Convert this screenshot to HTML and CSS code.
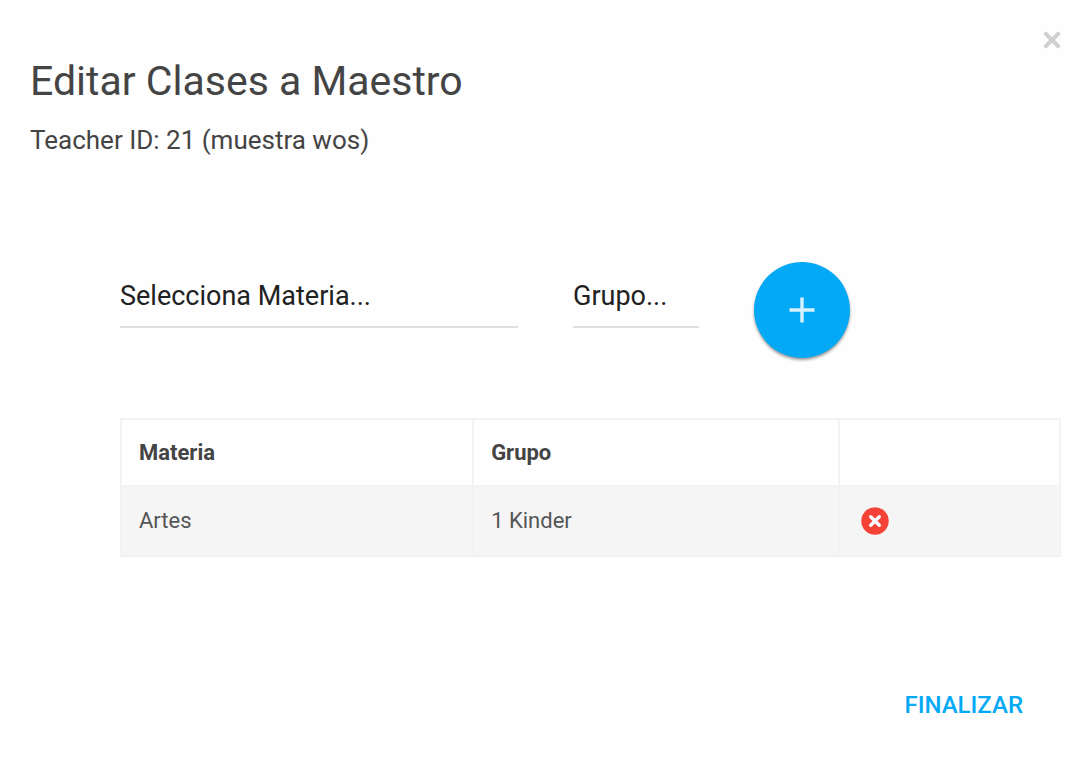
FILE: index.html
```html
<!DOCTYPE html>
<html lang="es">
<head>
    <meta charset="UTF-8">
    <meta name="viewport" content="width=device-width, initial-scale=1.0">
    <title>Editar Clases a Maestro</title>
    <link rel="stylesheet" href="styles.css">
</head>
<body>
    <main class="modal">
        <button type="button" class="close-btn" aria-label="Cerrar">
            <svg viewBox="0 0 18 18" width="18" height="18">
                <path d="M3 3L15 15M15 3L3 15" stroke="currentColor" stroke-width="4" stroke-linecap="square"/>
            </svg>
        </button>

        <header class="modal-header">
            <h1>Editar Clases a Maestro</h1>
            <p>Teacher ID: 21 (muestra wos)</p>
        </header>

        <div class="modal-body">
            <form class="class-form">
                <select class="field" id="materia" aria-label="Materia">
                    <option>Selecciona Materia...</option>
                </select>
                <select class="field" id="grupo" aria-label="Grupo">
                    <option>Grupo...</option>
                </select>
                <button type="button" class="add-btn" aria-label="Agregar">
                    <svg viewBox="0 0 26 26" width="26" height="26">
                        <path d="M13 0.5V25.5M0.5 13H25.5" stroke="currentColor" stroke-width="3.4"/>
                    </svg>
                </button>
            </form>

            <table class="class-table">
                <thead>
                    <tr>
                        <th class="col-materia">Materia</th>
                        <th class="col-grupo">Grupo</th>
                        <th></th>
                    </tr>
                </thead>
                <tbody>
                    <tr>
                        <td>Artes</td>
                        <td>1 Kinder</td>
                        <td>
                            <button type="button" class="delete-btn" aria-label="Eliminar">
                                <svg viewBox="0 0 28 28" width="28" height="28">
                                    <circle cx="14" cy="14" r="13.7" fill="#f44336"/>
                                    <path d="M9.7 9.7L18.3 18.3M18.3 9.7L9.7 18.3" stroke="#fff" stroke-width="3.4" stroke-linecap="round"/>
                                </svg>
                            </button>
                        </td>
                    </tr>
                </tbody>
            </table>
        </div>

        <footer class="modal-footer">
            <button type="button" class="finish-btn">FINALIZAR</button>
        </footer>
    </main>
</body>
</html>
```

FILE: styles.css
```css
* {
    margin: 0;
    padding: 0;
    box-sizing: border-box;
}

body {
    background-color: #fefefe;
    color: #444;
    font-family: Roboto, "Liberation Sans", sans-serif;
}

button {
    border: none;
    background: none;
    font-family: inherit;
    cursor: pointer;
}

svg {
    display: block;
}

.modal {
    position: relative;
    padding: 56px 29px 30px 30px;
}

.close-btn {
    position: absolute;
    top: 31px;
    right: 29px;
    color: #d0d0d0;
}

.modal-header h1 {
    font-size: 41px;
    font-weight: 400;
    line-height: 50px;
}

.modal-header p {
    margin-top: 16px;
    font-size: 26px;
    line-height: 36px;
}

.modal-body {
    padding: 104px 0 0 90px;
}

.class-form {
    display: grid;
    grid-template-columns: 398fr 126fr 307fr;
    column-gap: 55px;
    align-items: start;
}

.field {
    width: 100%;
    height: 66px;
    padding-top: 4px;
    border: none;
    border-bottom: 2px solid #e0e0e0;
    border-radius: 0;
    background: none;
    appearance: none;
    color: #212121;
    font-family: inherit;
    font-size: 27px;
}

.add-btn {
    display: flex;
    align-items: center;
    justify-content: center;
    width: 96px;
    height: 96px;
    border-radius: 50%;
    background-color: #03a9f4;
    box-shadow: 0 2px 3px rgba(0, 0, 0, 0.4);
    color: #d7f0fd;
}

.class-table {
    width: 100%;
    margin-top: 60px;
    border-collapse: collapse;
    table-layout: fixed;
    font-size: 22px;
    line-height: 28px;
}

.class-table th,
.class-table td {
    height: 67px;
    padding: 0 17px;
    border: 2px solid #f3f3f3;
    text-align: left;
}

.class-table td {
    height: 70px;
    border-color: #f2f2f2;
    background-color: #f5f5f5;
    color: #555;
}

.col-materia {
    width: 37.5%;
}

.col-grupo {
    width: 39%;
}

.delete-btn {
    display: block;
    margin-left: 4px;
}

.modal-footer {
    display: flex;
    justify-content: flex-end;
    padding: 120px 38px 0 0;
}

.finish-btn {
    color: #03a9f4;
    font-size: 24px;
    font-weight: 500;
    line-height: 56px;
}
```
